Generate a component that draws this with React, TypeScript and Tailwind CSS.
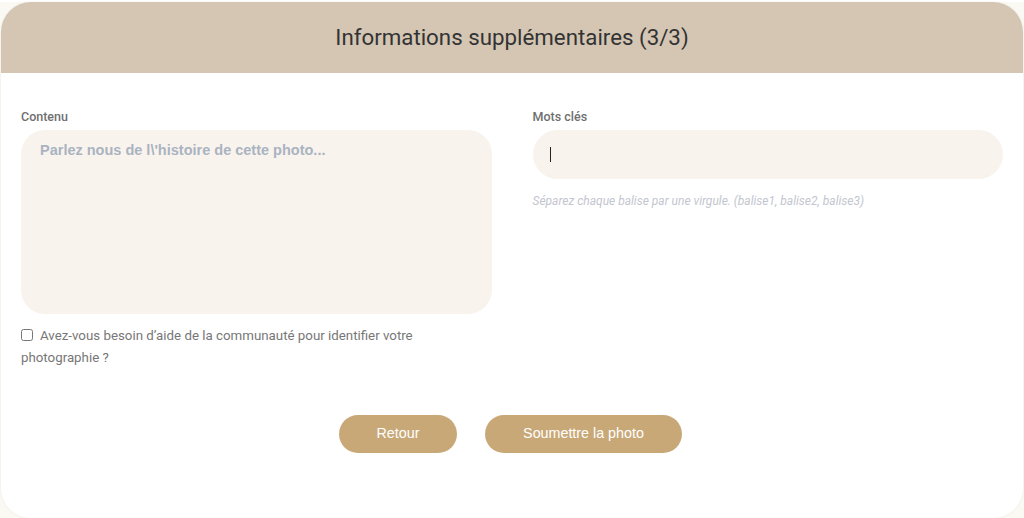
import { useState } from 'react';

export default function App() {
	const [help, setHelp] = useState(false);

	return (
		<div className="w-[1024px] h-[518px] bg-[#fbf9f4] font-['Roboto',sans-serif]">
			<div className="w-[1022px] h-[516px] ml-px mt-[2px] bg-white rounded-[30px] shadow-[0_0_3px_rgba(0,0,0,0.06)] overflow-hidden flex flex-col">
				<div className="h-[71px] bg-[#d4c6b3] flex items-center justify-center">
					<h1 className="text-[22.3px] text-[#333] pt-[1px]">Informations supplémentaires (3/3)</h1>
				</div>

				<div className="px-[20px] pt-[36px] grid grid-cols-2 gap-x-[41px]">
					<div>
						<label className="block text-[12.5px] font-medium text-[#6f6f6f] mb-[6px] leading-[15px]">Contenu</label>
						<textarea
							placeholder="Parlez nous de l\'histoire de cette photo..."
							className="block w-full h-[184px] resize-none rounded-[24px] bg-[#f9f3ed] px-[19px] py-[10px] text-[14.5px] font-bold font-['Liberation_Sans',sans-serif] placeholder:text-[#a9b3c1] outline-none"
						/>
						<div className="mt-[11px] text-[13.3px] text-[#777] leading-[22px]">
							<input
								type="checkbox"
								checked={help}
								onChange={() => setHelp(!help)}
								className="w-[12px] h-[12px] mr-[7px] align-[-1px] accent-[#c9a878]"
							/>
							Avez-vous besoin d’aide de la communauté pour identifier votre photographie ?
						</div>
					</div>

					<div>
						<label className="block text-[12.5px] font-medium text-[#6f6f6f] mb-[6px] leading-[15px]">Mots clés</label>
						<div className="relative">
							<input
								type="text"
								className="block w-full h-[49px] rounded-full bg-[#f9f3ed] px-[17px] text-[14px] outline-none"
							/>
							<span className="absolute left-[17px] top-[17px] w-px h-[15px] bg-[#222]" />
						</div>
						<p className="mt-[13px] text-[12px] italic text-[#c3c6cf]">Séparez chaque balise par une virgule. (balise1, balise2, balise3)</p>
					</div>
				</div>

				<div className="mt-[46px] flex justify-center gap-[28px] pr-[3px]">
					<button className="w-[118px] h-[38px] rounded-full bg-[#c9a878] text-white text-[14.3px] font-['Liberation_Sans',sans-serif]">Retour</button>
					<button className="w-[197px] h-[38px] rounded-full bg-[#c9a878] text-white text-[14.3px] font-['Liberation_Sans',sans-serif]">Soumettre la photo</button>
				</div>
			</div>
		</div>
	);
}
